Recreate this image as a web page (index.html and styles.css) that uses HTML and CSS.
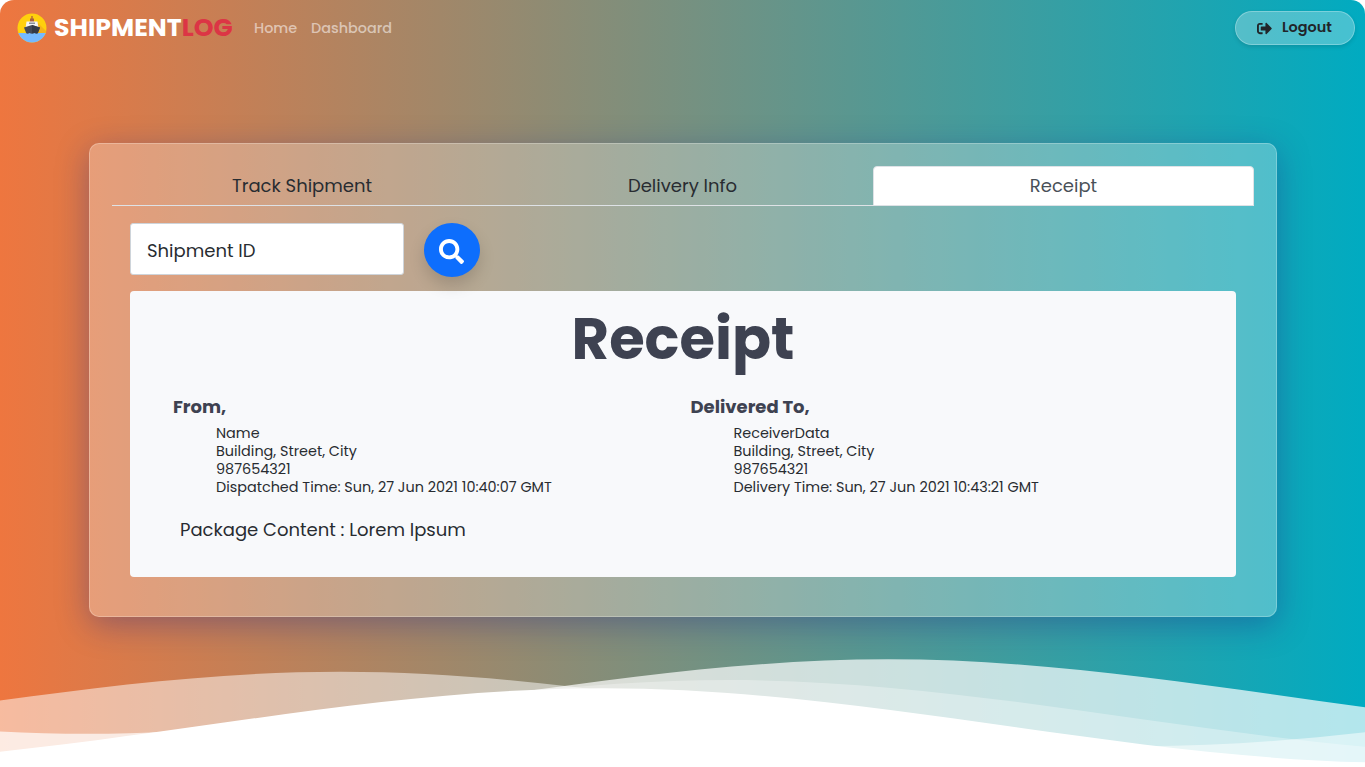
FILE: index.html
```html
<!DOCTYPE html>
<html lang="en">
<head>
<meta charset="utf-8">
<title>Shipment Log</title>
<link rel="stylesheet" href="styles.css">
</head>
<body>
<div class="page">
  <nav class="navbar">
    <a class="brand">
      <svg class="logo" viewBox="0 0 30 30">
        <defs><clipPath id="disc"><circle cx="15" cy="15" r="14.5"/></clipPath></defs>
        <g clip-path="url(#disc)">
          <rect width="30" height="30" fill="#ffd00d"/>
          <path d="M19 8L31 20H20z" fill="#f5b21b"/>
          <path d="M14.300 3h1.400v4h-1.400z" fill="#b5653a"/>
          <path d="M13 5.500h4V9h-4z" fill="#a9603f"/>
          <path d="M9.500 8.500h11l1 7h-13z" fill="#f4f4f4"/>
          <path d="M12 9.500h6v1.500h-6z" fill="#8a8f9a"/>
          <path d="M7 14.500l8-2.500 8 2.500L20.500 21h-11z" fill="#454a57"/>
          <path d="M15 12l8 2.500L20.500 21H15z" fill="#353a46"/>
          <path d="M0 20h8.500q2 1.500 4 0 2.500 1.500 5 0 2 1.500 4 0H30v10H0z" fill="#75b9ff"/>
        </g>
      </svg>
      <span class="brand-name">SHIPMENT<b>LOG</b></span>
    </a>
    <a class="nav-link home">Home</a>
    <a class="nav-link">Dashboard</a>
    <button class="logout">
      <svg class="logout-icon" viewBox="0 0 512 512"><path fill="currentColor" d="M497 273L329 441c-15 15-41 4.500-41-17v-96H152c-13.300 0-24-10.700-24-24v-96c0-13.300 10.700-24 24-24h136V88c0-21.400 25.900-32 41-17l168 168c9.300 9.400 9.300 24.600 0 34zM192 436v-40c0-6.600-5.400-12-12-12H96c-17.700 0-32-14.300-32-32V160c0-17.700 14.300-32 32-32h84c6.600 0 12-5.400 12-12V76c0-6.600-5.400-12-12-12H96c-53 0-96 43-96 96v192c0 53 43 96 96 96h84c6.600 0 12-5.400 12-12z"/></svg>
      <span>Logout</span>
    </button>
  </nav>

  <main class="card">
    <div class="tabs">
      <a class="tab">Track Shipment</a>
      <a class="tab">Delivery Info</a>
      <a class="tab active">Receipt</a>
    </div>
    <div class="search">
      <div class="field"><span>Shipment ID</span></div>
      <button class="search-btn">
        <svg viewBox="0 0 512 512"><path fill="#fff" d="M505 442.700L405.300 343c-4.500-4.500-10.600-7-17-7H372c27.600-35.300 44-79.700 44-128C416 93.100 322.900 0 208 0S0 93.100 0 208s93.100 208 208 208c48.300 0 92.700-16.400 128-44v16.300c0 6.400 2.500 12.500 7 17l99.700 99.700c9.400 9.400 24.600 9.400 33.900 0l28.300-28.300c9.400-9.400 9.400-24.600.1-34zM208 336c-70.700 0-128-57.200-128-128 0-70.700 57.200-128 128-128 70.700 0 128 57.200 128 128 0 70.700-57.200 128-128 128z"/></svg>
      </button>
    </div>
    <section class="receipt">
      <h1>Receipt</h1>
      <div class="parties">
        <div class="party">
          <h2>From,</h2>
          <ul>
            <li>Name</li>
            <li>Building, Street, City</li>
            <li>987654321</li>
            <li>Dispatched Time: Sun, 27 Jun 2021 10:40:07 GMT</li>
          </ul>
        </div>
        <div class="party">
          <h2>Delivered To,</h2>
          <ul>
            <li>ReceiverData</li>
            <li>Building, Street, City</li>
            <li>987654321</li>
            <li>Delivery Time: Sun, 27 Jun 2021 10:43:21 GMT</li>
          </ul>
        </div>
      </div>
      <p class="content">Package Content : Lorem Ipsum</p>
    </section>
  </main>

  <svg class="waves" viewBox="0 24 150 28" preserveAspectRatio="none">
    <defs><path id="wave" d="M-160 44c30 0 58-18 88-18s58 18 88 18 58-18 88-18 58 18 88 18v44h-352z"/></defs>
    <use href="#wave" x="-6.400" y="0" fill="rgba(255,255,255,.7)"/>
    <use href="#wave" x="109.400" y="3" fill="rgba(255,255,255,.5)"/>
    <use href="#wave" x="-24" y="5" fill="rgba(255,255,255,.3)"/>
    <use href="#wave" x="-37.700" y="7" fill="#fff"/>
  </svg>
</div>
</body>
</html>
```
FILE: styles.css
```css
* { box-sizing: border-box; }
body { margin: 0; background: #fff; font-family: "Poppins", Inter, sans-serif; color: #282c31; font-weight: 400; font-size: 18px; }
.page {
  height: 767px; display: flex; flex-direction: column; overflow: hidden;
  border-radius: 14px 14px 0 0;
  background: linear-gradient(90deg, #ee763f 0%, #00abc1 100%);
}
.navbar { height: 56px; flex: none; display: flex; align-items: center; padding: 0 10px 0 17px; }
.brand { display: flex; align-items: center; width: 237px; }
.logo { width: 30px; height: 30px; margin-right: 7px; }
.brand-name { color: #fff; font-size: 25.2px; font-weight: 700; line-height: 30px; white-space: nowrap; }
.brand-name b { color: #dc3545; font-weight: 700; }
.nav-link { color: rgba(255,255,255,.55); font-size: 14.4px; font-weight: 500; white-space: nowrap; }
.home { width: 57px; }
.logout {
  margin-left: auto; width: 120px; height: 34px; border-radius: 17px; padding: 0 0 2px 21px;
  display: flex; align-items: center; gap: 10px; text-align: left;
  font: 600 14.4px "Poppins", Inter, sans-serif; color: #212529;
  background: rgba(255,255,255,.27); border: 1px solid rgba(255,255,255,.27);
  box-shadow: 0 2px 4px rgba(0,0,0,.12);
}
.logout-icon { width: 15px; height: 15px; margin-top: 2px; }
.card {
  width: 1188px; height: 474px; flex: none; margin: 87px 0 0 89px; padding: 22px;
  background: rgba(255,255,255,.27); border: 1px solid rgba(255,255,255,.25); border-radius: 10px;
  box-shadow: 0 8px 32px rgba(31,38,135,.37);
}
.tabs { display: grid; grid-template-columns: 380px 381px 381px; height: 40px; border-bottom: 1px solid #dee2e6; }
.tab { height: 40px; line-height: 40px; text-align: center; font-size: 18px; }
.tab.active { background: #fff; color: #495057; border: 1px solid #dee2e6; border-radius: 4px 4px 0 0; line-height: 38px; }
.search { display: flex; gap: 20px; margin: 17px 0 0 18px; }
.field { width: 274px; height: 52px; padding-left: 16px; background: #fff; border: 1px solid #ced4da; border-radius: 3px; font-size: 18px; line-height: 54px; }
.search-btn {
  width: 56px; height: 54px; border: 0; border-radius: 50%; padding: 0 2px 0 0; background: #0d6efd;
  display: flex; align-items: center; justify-content: center; box-shadow: 0 8px 16px rgba(0,0,0,.15);
}
.search-btn svg { width: 25px; height: 25px; margin-top: 2px; }
.receipt { margin: 14px 18px 0 18px; height: 286px; background: #f8f9fb; border-radius: 4px; }
.receipt h1 { margin: 0; padding-top: 10px; height: 103px; text-align: center; font-size: 57.6px; font-weight: 700; line-height: 76px; color: #3e4251; }
.parties { display: flex; padding-left: 43px; }
.party { width: 517.500px; }
.party h2 { margin: 0; font-size: 18px; font-weight: 700; line-height: 26px; color: #3e4251; }
.party ul { list-style: none; margin: 4px 0 0; padding: 0 0 0 43px; font-size: 14.4px; line-height: 18px; white-space: nowrap; }
.content { margin: 21px 0 0 50px; font-size: 18px; line-height: 26px; }
.waves { flex: none; display: block; width: 100%; height: 116px; margin-top: auto; }
```
